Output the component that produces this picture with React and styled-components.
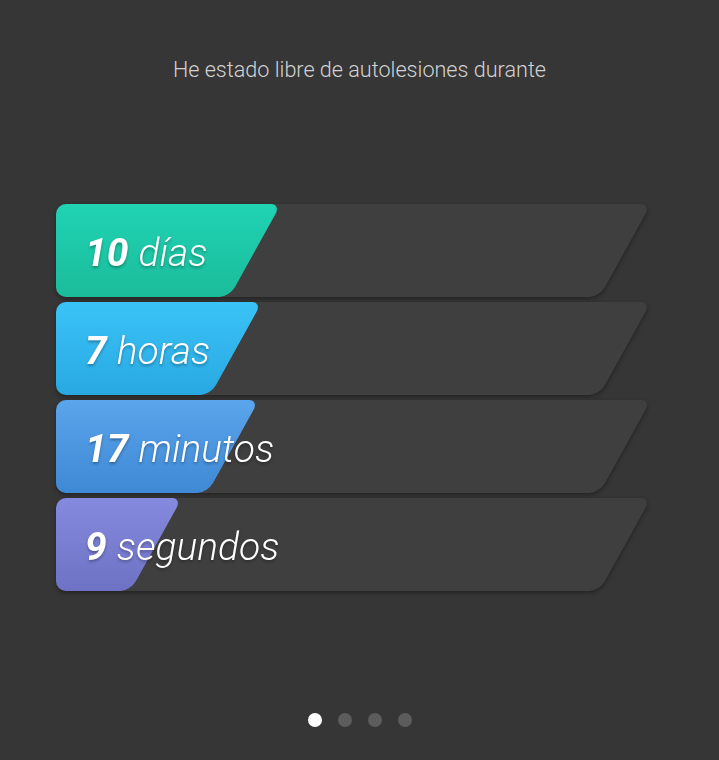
import styled, { createGlobalStyle } from 'styled-components'

const GlobalStyle = createGlobalStyle`
    html, body {
        margin: 0;
        padding: 0;
        background: #363636;
    }
    body {
        font-family: Roboto, "Noto Sans", sans-serif;
    }
`

const Screen = styled.div`
    width: 719px;
    height: 760px;
    background: #363636;
    display: flex;
    flex-direction: column;
    align-items: center;
    box-sizing: border-box;
    padding-top: 56px;
`
const Heading = styled.p`
    margin: 0;
    font-weight: 300;
    font-size: 21.6px;
    line-height: 28px;
    color: #d2d2d2;
`
const List = styled.div`
    margin-top: 120px;
    display: flex;
    flex-direction: column;
    gap: 5px;
    align-self: flex-start;
    margin-left: 56px;
`
const Row = styled.div`
    display: grid;
    width: 595px;
    height: 93px;
    border-radius: 10px 0 0 10px;
    overflow: hidden;
    filter: drop-shadow(0 2px 2px rgba(0, 0, 0, 0.35));
`
const Track = styled.div`
    grid-area: 1 / 1;
    margin-left: -60px;
    width: 655px;
    height: 93px;
    background: #3f3f3f;
    border-radius: 0 10px 10px 0;
    transform: skewX(-29deg);
    transform-origin: top left;
`
const Fill = styled.div`
    grid-area: 1 / 1;
    margin-left: -60px;
    width: ${p => p.$width + 60}px;
    height: 93px;
    background: linear-gradient(180deg, ${p => p.$from}, ${p => p.$to});
    border-radius: 0 10px 10px 0;
    transform: skewX(-29deg);
    transform-origin: top left;
`
const Label = styled.div`
    grid-area: 1 / 1;
    display: flex;
    align-items: center;
    padding-left: 29px;
    padding-top: 4px;
    gap: 10px;
    color: #fff;
    font-size: 39px;
    font-style: italic;
    text-shadow: 0 2px 3px rgba(0, 0, 0, 0.3);
    z-index: 1;
`
const Num = styled.span`
    font-weight: 700;
`
const Unit = styled.span`
    font-weight: 300;
`
const Dots = styled.div`
    margin-top: auto;
    margin-bottom: 33px;
    display: flex;
    gap: 16px;
`
const Dot = styled.span`
    width: 14px;
    height: 14px;
    border-radius: 50%;
    background: ${p => (p.$active ? '#ffffff' : '#5c5c5c')};
`

const rows = [
    { num: '10', unit: 'días', width: 225, from: '#1fd3b3', to: '#1bbc9b' },
    { num: '7', unit: 'horas', width: 206, from: '#3ac3f7', to: '#29a8e2' },
    { num: '17', unit: 'minutos', width: 203, from: '#5aa5eb', to: '#3f88d5' },
    { num: '9', unit: 'segundos', width: 126, from: '#868ade', to: '#6e72c5' },
]

const App = () => {
  return (
    <Screen>
      <GlobalStyle />
      <Heading>He estado libre de autolesiones durante</Heading>
      <List>
        {rows.map(r => (
          <Row key={r.unit}>
            <Track />
            <Fill $width={r.width} $from={r.from} $to={r.to} />
            <Label>
              <Num>{r.num}</Num>
              <Unit>{r.unit}</Unit>
            </Label>
          </Row>
        ))}
      </List>
      <Dots>
        <Dot $active />
        <Dot />
        <Dot />
        <Dot />
      </Dots>
    </Screen>
  )
}

export default App
